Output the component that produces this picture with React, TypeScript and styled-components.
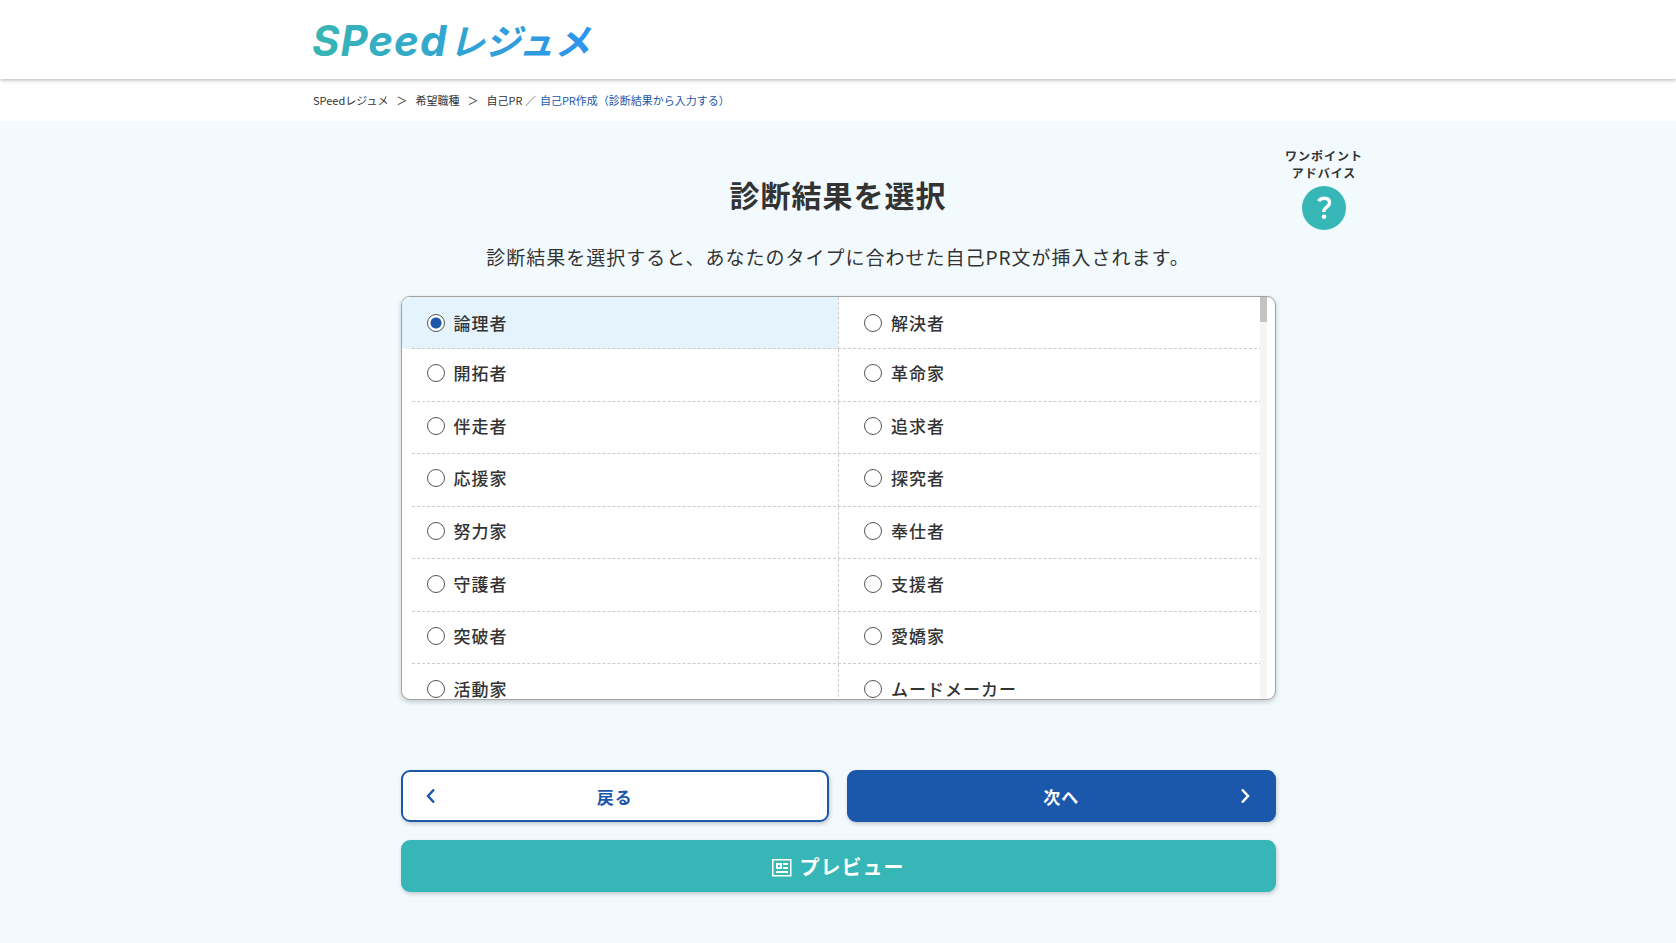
import React, { useState } from "react";
import styled, { createGlobalStyle } from "styled-components";

const GlobalStyle = createGlobalStyle`
  *, *::before, *::after { box-sizing: border-box; }
  body {
    margin: 0;
    background: #f2fafd;
    color: #333;
    font-family: "Noto Sans CJK JP", sans-serif;
  }
  h1, p, ol { margin: 0; padding: 0; }
  main { letter-spacing: 1px; }
  button, input { font: inherit; letter-spacing: inherit; }
`;

const Header = styled.header`
  position: relative;
  background: #fff;
  height: 79px;
  box-shadow: 0 1px 4px rgba(0, 0, 0, 0.3);
`;

const Inner = styled.div`
  width: 100%;
  max-width: 1050px;
  margin: 0 auto;
`;

const LogoLink = styled.a`
  display: block;
  width: 300px;
  height: 79px;
  svg { display: block; }
`;

const BreadcrumbBar = styled.nav`
  background: #fff;
  height: 42px;
`;

const Crumbs = styled.ol`
  display: flex;
  align-items: center;
  height: 42px;
  list-style: none;
  font-size: 11px;
  line-height: 16px;
  white-space: nowrap;
  a { color: inherit; text-decoration: none; }
`;

const Chevron = styled.li`
  width: 27px;
  display: flex;
  justify-content: center;
`;

const Current = styled.span`
  color: #1b58ac;
  margin-left: 4px;
`;

const Heading = styled.div`
  display: grid;
  grid-template-columns: 1fr auto 1fr;
  padding-top: 26px;
  margin-bottom: 24px;
`;

const Titles = styled.div`
  grid-column: 2;
  text-align: center;
`;

const Title = styled.h1`
  margin-top: 27px;
  font-size: 30px;
  line-height: 40px;
  font-weight: 700;
`;

const Lead = styled.p`
  margin-top: 28px;
  font-size: 19px;
  line-height: 30px;
`;

const Advice = styled.button`
  justify-self: end;
  align-self: start;
  display: flex;
  flex-direction: column;
  align-items: center;
  gap: 5px;
  padding: 0;
  border: 0;
  background: none;
  color: #333;
  font-size: 12px;
  line-height: 17px;
  font-weight: 700;
  cursor: pointer;
`;

const AdviceMark = styled.span`
  width: 44px;
  height: 44px;
  border-radius: 50%;
  background: #36b6b6;
  display: grid;
  place-items: center;
`;

const Column = styled.div`
  width: 100%;
  max-width: 875px;
  margin: 0 auto;
  padding-bottom: 50px;
`;

const Panel = styled.div`
  position: relative;
  height: 404px;
  overflow: hidden;
  border: 1px solid #a3a3a3;
  border-radius: 9px;
  background: #fff;
  box-shadow: 0 2px 5px rgba(0, 0, 0, 0.2);
`;

const OptionRows = styled.div`
  display: grid;
  grid-template-rows: 52px repeat(7, 1fr);
  height: 420px;
`;

const OptionRow = styled.div`
  position: relative;
  display: grid;
  grid-template-columns: 1fr 1fr;
  &::after {
    content: "";
    position: absolute;
    left: 10px;
    right: 8px;
    bottom: 0;
    border-bottom: 1px dashed #ccc;
  }
`;

const Option = styled.label<{ $selected: boolean }>`
  display: flex;
  align-items: center;
  gap: 9px;
  padding: 0 0 4px 25px;
  background: ${(p) => (p.$selected ? "#e5f3fd" : "transparent")};
  font-size: 17px;
  line-height: 24px;
  font-weight: 500;
  cursor: pointer;
  & + & { border-left: 1px dashed #ccc; }
  ${OptionRow}:first-child & { padding-bottom: 0; }
`;

const Radio = styled.input`
  appearance: none;
  width: 18px;
  height: 18px;
  margin: 0;
  border: 1px solid #555;
  border-radius: 50%;
  background: #fff;
  &:checked {
    background: radial-gradient(circle, #1b58ac 5px, #fff 6px);
  }
`;

const ScrollTrack = styled.div`
  position: absolute;
  top: 0;
  bottom: 0;
  right: 8px;
  width: 7px;
  background: #f5f5f5;
`;

const ScrollThumb = styled.div`
  height: 25px;
  background: #c3c3c3;
`;

const Actions = styled.div`
  display: grid;
  grid-template-columns: 1fr 1fr;
  gap: 18px;
  margin-top: 70px;
`;

const ActionButton = styled.button<{ $tone: "outline" | "blue" | "teal" }>`
  display: grid;
  grid-template-columns: 24px 1fr 24px;
  align-items: center;
  height: 52px;
  padding: 0 18px;
  border-radius: 9px;
  border: 2px solid
    ${(p) => (p.$tone === "teal" ? "#36b6b6" : "#1b58ac")};
  background: ${(p) =>
    p.$tone === "outline" ? "#fff" : p.$tone === "blue" ? "#1b58ac" : "#36b6b6"};
  color: ${(p) => (p.$tone === "outline" ? "#1b58ac" : "#fff")};
  box-shadow: 1px 2px 4px rgba(0, 0, 0, 0.2);
  font-size: 17px;
  line-height: 26px;
  font-weight: 700;
  cursor: pointer;
`;

const PreviewButton = styled(ActionButton)`
  grid-column: 1 / -1;
  display: flex;
  justify-content: center;
  gap: 8px;
  padding-top: 2px;
  font-size: 20px;
  svg { margin-top: 2px; }
`;

const Caption = styled.span`
  grid-column: 2;
  padding-top: 1px;
`;

const ROWS = [
  ["論理者", "解決者"],
  ["開拓者", "革命家"],
  ["伴走者", "追求者"],
  ["応援家", "探究者"],
  ["努力家", "奉仕者"],
  ["守護者", "支援者"],
  ["突破者", "愛嬌家"],
  ["活動家", "ムードメーカー"],
];

function Logo() {
  return (
    <svg width="300" height="79" viewBox="0 0 300 79" role="img" aria-label="SPeedレジュメ">
      <defs>
        <linearGradient id="logo" gradientUnits="userSpaceOnUse" x1="0" y1="0" x2="278" y2="0">
          <stop offset="0" stopColor="#37b6b4" />
          <stop offset="1" stopColor="#2c94ee" />
        </linearGradient>
      </defs>
      <g fill="url(#logo)" fontStyle="italic">
        <text x="-1" y="56" fontFamily="Inter, sans-serif" fontSize="42" fontWeight="700" letterSpacing="1">SPeed</text>
        <text x="136" y="55" fontFamily="'Noto Sans CJK JP', sans-serif" fontSize="36" fontWeight="700">レジュメ</text>
      </g>
    </svg>
  );
}

function Arrow({ left = false }: { left?: boolean }) {
  return (
    <svg width="24" height="24" viewBox="0 0 24 24" fill="none" stroke="currentColor" strokeWidth="2.5" aria-hidden="true">
      <path d={left ? "M13 5.500 7 12l6 6.500" : "M10 5.500l6 6.500-6 6.500"} />
    </svg>
  );
}

function PreviewIcon() {
  return (
    <svg width="20" height="18" viewBox="0 0 20 18" fill="none" stroke="currentColor" aria-hidden="true">
      <rect x=".75" y=".75" width="18" height="16" strokeWidth="1.5" />
      <rect x="5" y="5" width="4" height="4" strokeWidth="2" />
      <path d="M11 5h5M11 9h5M4 13h12" strokeWidth="2" />
    </svg>
  );
}

export default function App() {
  const [selected, setSelected] = useState("論理者");
  return (
    <>
      <GlobalStyle />
      <Header>
        <Inner>
          <LogoLink href="#top"><Logo /></LogoLink>
        </Inner>
      </Header>
      <BreadcrumbBar aria-label="パンくずリスト">
        <Inner>
          <Crumbs>
            <li><a href="#top">SPeedレジュメ</a></li>
            <Chevron aria-hidden="true">＞</Chevron>
            <li><a href="#job">希望職種</a></li>
            <Chevron aria-hidden="true">＞</Chevron>
            <li>
              <a href="#pr">自己PR</a> ／<Current aria-current="page">自己PR作成（診断結果から入力する）</Current>
            </li>
          </Crumbs>
        </Inner>
      </BreadcrumbBar>
      <main>
        <Inner>
          <Heading>
            <Titles>
              <Title>診断結果を選択</Title>
              <Lead id="lead">診断結果を選択すると、あなたのタイプに合わせた自己PR文が挿入されます。</Lead>
            </Titles>
            <Advice type="button">
              <span>ワンポイント<br />アドバイス</span>
              <AdviceMark>
                <svg width="44" height="44" viewBox="0 0 44 44" fill="none" stroke="#fff" aria-hidden="true">
                  <path d="M16.600 15.200C18 13 19.800 12.300 22.200 12.300c3.400 0 5.400 1.800 5.400 4.500 0 4-5.800 4.600-5.800 8.300v1" strokeWidth="3.400" />
                  <circle cx="22" cy="30.800" r="2.300" fill="#fff" stroke="none" />
                </svg>
              </AdviceMark>
            </Advice>
          </Heading>
        </Inner>
        <Column>
          <Panel role="radiogroup" aria-labelledby="lead">
            <OptionRows>
              {ROWS.map((row) => (
                <OptionRow key={row[0]}>
                  {row.map((name) => (
                    <Option key={name} $selected={selected === name}>
                      <Radio
                        type="radio"
                        name="type"
                        value={name}
                        checked={selected === name}
                        onChange={() => setSelected(name)}
                      />
                      {name}
                    </Option>
                  ))}
                </OptionRow>
              ))}
            </OptionRows>
            <ScrollTrack><ScrollThumb /></ScrollTrack>
          </Panel>
          <Actions>
            <ActionButton type="button" $tone="outline">
              <Arrow left />
              <Caption>戻る</Caption>
            </ActionButton>
            <ActionButton type="button" $tone="blue">
              <Caption>次へ</Caption>
              <Arrow />
            </ActionButton>
            <PreviewButton type="button" $tone="teal">
              <PreviewIcon />
              プレビュー
            </PreviewButton>
          </Actions>
        </Column>
      </main>
    </>
  );
}
